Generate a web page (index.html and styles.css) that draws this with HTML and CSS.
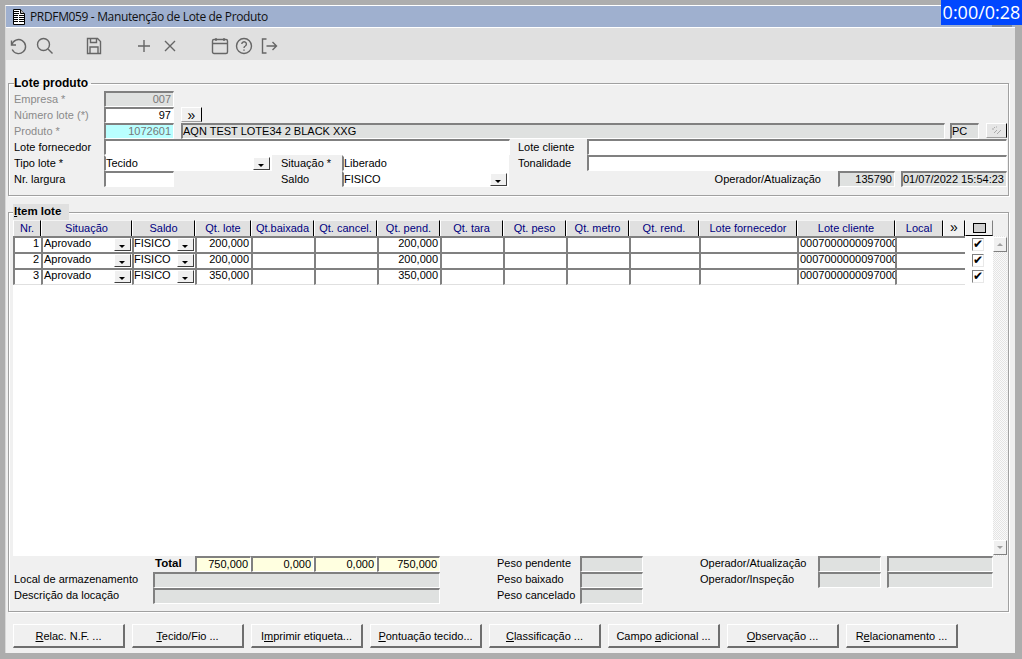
FILE: index.html
```html
<!DOCTYPE html>
<html lang="pt">
<head>
<meta charset="utf-8">
<title>PRDFM059</title>
<link rel="stylesheet" href="styles.css">
</head>
<body>
<div class="timer">0:00/0:28</div>
<div class="window">
  <header class="titlebar">
    <svg class="docicon" viewBox="0 0 13 16" width="13" height="16"><path d="M1.500.5h7l4 4v11h-11z" fill="#fff" stroke="#000"/><path d="M8.500.5v4h4" fill="#bbb" stroke="#000"/><path d="M1 2.500h6M1 4.500h6M1 6.500h11M1 8.500h11M1 10.500h11M1 12.500h11" stroke="#000"/><path d="M6.500 6v8" stroke="#fff"/></svg>
    <span class="title">PRDFM059 - Manutenção de Lote de Produto</span>
    <span class="close-stub"></span>
  </header>
  <nav class="toolbar">
    <svg class="tool t-undo" viewBox="0 0 18 18"><path d="M2.500 3.500v4.500h4.500"/><path d="M2.800 7.800A7 7 0 1 1 3.200 12.500"/></svg>
    <svg class="tool t-search" viewBox="0 0 18 18"><circle cx="7.500" cy="7.500" r="6"/><path d="M12 12l4.500 4.500"/></svg>
    <svg class="tool t-save" viewBox="0 0 18 18"><path d="M2.500 1.500h10l3 3v12h-13z"/><path d="M5.500 1.500v4h6v-4"/><path d="M5 16.500v-6.500h8v6.500"/></svg>
    <svg class="tool t-plus" viewBox="0 0 18 18"><path d="M9 3v12M3 9h12"/></svg>
    <svg class="tool t-close" viewBox="0 0 18 18"><path d="M4 4l10 10M14 4l-10 10"/></svg>
    <svg class="tool t-cal" viewBox="0 0 18 18"><rect x="1.500" y="2.500" width="15" height="14" rx="1.500"/><path d="M1.500 6.500h15M5 1v3M13 1v3"/></svg>
    <svg class="tool t-help" viewBox="0 0 18 18"><circle cx="9" cy="9" r="7.500"/><path d="M6.800 7a2.300 2.300 0 1 1 3.500 2c-.9.500-1.300 1-1.300 2"/><path d="M9 12.600v1.200"/></svg>
    <svg class="tool t-exit" viewBox="0 0 18 18"><path d="M5.500 2h-4v14h4"/><path d="M5.500 9h10M11.500 5l4 4-4 4"/></svg>
  </nav>

  <main class="content">
    <fieldset class="group group-lote">
      <legend class="legend">Lote produto</legend>
      <div class="row">
        <label class="lbl off">Empresa *</label>
        <div class="fld w70 ro right muted">007</div>
      </div>
      <div class="row">
        <label class="lbl off">Número lote (*)</label>
        <div class="fld w70 right">97</div>
        <button class="btn-mini ml7" type="button">»</button>
      </div>
      <div class="row">
        <label class="lbl off">Produto *</label>
        <div class="fld w70 cyan right muted">1072601</div>
        <div class="fld w764 ml7 ro">AQN TEST LOTE34 2 BLACK XXG</div>
        <div class="fld w29 ml5 ro">PC</div>
        <button class="btn-mini ml7 btn-off" type="button">
          <svg viewBox="0 0 12 10" width="12" height="10"><path d="M1 3h2M4 1l-1 1M3 7l3-3M6 8l4-4M5 1h1" stroke="#aaa" fill="none"/></svg>
        </button>
      </div>
      <div class="row">
        <label class="lbl">Lote fornecedor</label>
        <div class="fld w406"></div>
        <label class="lbl-s ml8 w69">Lote cliente</label>
        <div class="fld w420"></div>
      </div>
      <div class="row">
        <label class="lbl">Tipo lote *</label>
        <div class="fld plain w168">Tecido<span class="drop"></span></div>
        <label class="lbl-s ml9 w61">Situação *</label>
        <div class="fld plain w167">Liberado</div>
        <label class="lbl-s ml9 w69">Tonalidade</label>
        <div class="fld w420"></div>
      </div>
      <div class="row">
        <label class="lbl">Nr. largura</label>
        <div class="fld w70"></div>
        <label class="lbl-s ml107 w61">Saldo</label>
        <div class="fld plain w167">FISICO<span class="drop"></span></div>
        <label class="lbl-s grow right">Operador/Atualização</label>
        <div class="fld w57 ml17 ro right">135790</div>
        <div class="fld w106 ml6 ro">01/07/2022 15:54:23</div>
      </div>
    </fieldset>

    <fieldset class="group group-item">
      <legend class="legend legend-item"><u>I</u>tem lote</legend>
      <div class="grid-wrap">
        <div class="grid-main">
          <div class="cols heads">
            <div class="head">Nr.</div><div class="head">Situação</div><div class="head">Saldo</div><div class="head">Qt. lote</div><div class="head">Qt.baixada</div><div class="head">Qt. cancel.</div><div class="head">Qt. pend.</div><div class="head">Qt. tara</div><div class="head">Qt. peso</div><div class="head">Qt. metro</div><div class="head">Qt. rend.</div><div class="head">Lote fornecedor</div><div class="head">Lote cliente</div>
            <div class="head-split"><div class="head">Local</div><div class="head head-more">»</div></div>
            <div class="head head-check"><span class="box"></span></div>
          </div>
          <div class="body">
            <div class="cols rowline">
              <div class="cell right">1</div><div class="cell">Aprovado<span class="drop"></span></div><div class="cell tight">FISICO<span class="drop"></span></div><div class="cell right">200,000</div><div class="cell"></div><div class="cell"></div><div class="cell right">200,000</div><div class="cell"></div><div class="cell"></div><div class="cell"></div><div class="cell"></div><div class="cell"></div><div class="cell clip">0007000000097000</div><div class="cell"></div>
              <div class="cell-check"><span class="check">✔</span></div>
            </div>
            <div class="cols rowline">
              <div class="cell right">2</div><div class="cell">Aprovado<span class="drop"></span></div><div class="cell tight">FISICO<span class="drop"></span></div><div class="cell right">200,000</div><div class="cell"></div><div class="cell"></div><div class="cell right">200,000</div><div class="cell"></div><div class="cell"></div><div class="cell"></div><div class="cell"></div><div class="cell"></div><div class="cell clip">0007000000097000</div><div class="cell"></div>
              <div class="cell-check"><span class="check">✔</span></div>
            </div>
            <div class="cols rowline">
              <div class="cell right">3</div><div class="cell">Aprovado<span class="drop"></span></div><div class="cell tight">FISICO<span class="drop"></span></div><div class="cell right">350,000</div><div class="cell"></div><div class="cell"></div><div class="cell right">350,000</div><div class="cell"></div><div class="cell"></div><div class="cell"></div><div class="cell"></div><div class="cell"></div><div class="cell clip">0007000000097000</div><div class="cell"></div>
              <div class="cell-check"><span class="check">✔</span></div>
            </div>
          </div>
        </div>
        <div class="scrollbar">
          <span class="sb-btn"><i class="arrow-up"></i></span>
          <span class="sb-btn"><i class="arrow-down"></i></span>
        </div>
      </div>

      <div class="totals">
        <div class="tot-left">
          <div class="row">
            <strong class="total-lbl">Total</strong>
            <div class="fld yellow w56 right">750,000</div>
            <div class="fld yellow w63 right">0,000</div>
            <div class="fld yellow w63 right">0,000</div>
            <div class="fld yellow w63 right">750,000</div>
          </div>
          <div class="row"><label class="lbl-t">Local de armazenamento</label><div class="fld ro w287"></div></div>
          <div class="row"><label class="lbl-t">Descrição da locação</label><div class="fld ro w287"></div></div>
        </div>
        <div class="tot-peso">
          <div class="row"><label class="lbl-p">Peso pendente</label><div class="fld ro w63"></div></div>
          <div class="row"><label class="lbl-p">Peso baixado</label><div class="fld ro w63"></div></div>
          <div class="row"><label class="lbl-p">Peso cancelado</label><div class="fld ro w63"></div></div>
        </div>
        <div class="tot-op">
          <div class="row"><label class="lbl-o">Operador/Atualização</label><div class="fld ro w63"></div><div class="fld ro w106 ml6"></div></div>
          <div class="row"><label class="lbl-o">Operador/Inspeção</label><div class="fld ro w63"></div><div class="fld ro w106 ml6"></div></div>
        </div>
      </div>
    </fieldset>

    <footer class="actions">
      <button class="action" type="button"><u>R</u>elac. N.F. ...</button>
      <button class="action" type="button"><u>T</u>ecido/Fio ...</button>
      <button class="action" type="button">I<u>m</u>primir etiqueta...</button>
      <button class="action" type="button"><u>P</u>ontuação tecido...</button>
      <button class="action" type="button"><u>C</u>lassificação ...</button>
      <button class="action" type="button">Campo <u>a</u>dicional ...</button>
      <button class="action" type="button"><u>O</u>bservação ...</button>
      <button class="action" type="button">R<u>e</u>lacionamento ...</button>
    </footer>
  </main>
</div>
</body>
</html>
```
FILE: styles.css
```css
* { box-sizing: border-box; }
html, body { margin: 0; height: 659px; overflow: hidden; }
body {
  position: relative;
  background: #adadad;
  font: 11px/16px "Liberation Sans", Arial, sans-serif;
  color: #000;
  padding: 5px 7px 6px 5px;
}
.timer {
  position: absolute; top: 0; right: 0; width: 81px; height: 25px; z-index: 2;
  background: #0047ff; color: #fff;
  font: 18px/25px "Open Sans", sans-serif;
  text-align: center; white-space: nowrap;
}
.window {
  height: 648px;
  display: flex; flex-direction: column;
  background: #f0f0f0;
  border-top: 1px solid #fff;
  border-left: 1px solid #d8d8d8;
}
.titlebar {
  position: relative;
  height: 22px; flex: none;
  background: #9fb0cf;
  display: flex; align-items: center;
  padding-left: 6px;
  border-bottom: 1px solid #fff;
}
.docicon { flex: none; }
.title { margin-left: 5px; font: 12px/16px "Open Sans", sans-serif; letter-spacing: -.35px; color: #111; white-space: nowrap; }
.close-stub { position: absolute; right: 3px; top: 19px; width: 20px; height: 2px; background: #7f8a9f; }
.toolbar {
  height: 32px; flex: none; background: #e0e0e0;
  display: flex; align-items: center; padding: 3px 0 0 3px;
}
.tool { width: 18px; height: 18px; flex: none; fill: none; stroke: #666; stroke-width: 1.4; }
.t-search { margin-left: 9px; }
.t-save { margin-left: 31px; }
.t-plus { margin-left: 32px; }
.t-close { margin-left: 8px; }
.t-cal { margin-left: 32px; }
.t-help { margin-left: 6px; }
.t-exit { margin-left: 8px; }

.content { flex: 1; display: flex; flex-direction: column; padding: 0 6px 0 2px; min-height: 0; }
.group {
  margin: 0; min-width: 0;
  border: 1px solid #a0a0a0;
  box-shadow: 1px 1px 0 #fff, inset 1px 1px 0 #fff;
}
.group-lote { margin-top: 16px; height: 120px; padding: 1px 1px 0 5px; }
.group-item { margin-top: 8px; height: 408px; padding: 0 1px 0 4px; }
.legend { padding: 0 3px 0 0; margin-left: 0; font-weight: 700; font-size: 12px; line-height: 14px; height: 14px; }
.legend-item { background: #e0e0e0; height: 16px; margin-left: 0; padding: 0 4px 0 1px; width: 56px; font-size: 11.500px; }

.row { display: flex; height: 16px; white-space: nowrap; }
.lbl { width: 90px; flex: none; }
.lbl.off { color: #8a8a8a; }
.lbl-s { flex: none; }
.grow { flex: 1; }
.right { text-align: right; }
.fld {
  position: relative; flex: none; height: 16px;
  border-style: solid; border-width: 2px 1px 1px 2px;
  border-color: #808080 #fff #fff #808080;
  background: #fff; padding: 0 1px 0 0;
  line-height: 13px; overflow: hidden; white-space: nowrap;
}
.fld.right { padding-right: 2px; }
.fld.plain { border-top-color: #fff; }
.ro { background: #dfe1e0; }
.cyan { background: #b9ffff; }
.yellow { background: #ffffe0; }
.muted { color: #777; }
.w29 { width: 29px; } .w56 { width: 56px; } .w57 { width: 57px; } .w61 { width: 61px; }
.w63 { width: 63px; } .w69 { width: 69px; } .w70 { width: 70px; } .w106 { width: 106px; }
.w167 { width: 167px; } .w168 { width: 168px; } .w287 { width: 287px; } .w406 { width: 406px; }
.w420 { width: 420px; } .w764 { width: 764px; }
.ml5 { margin-left: 5px; } .ml6 { margin-left: 6px; } .ml7 { margin-left: 7px; } .ml8 { margin-left: 8px; }
.ml9 { margin-left: 9px; } .ml17 { margin-left: 17px; } .ml107 { margin-left: 107px; }

.btn-mini {
  flex: none; width: 21px; height: 15px; padding: 0; margin-top: 0;
  background: #f0f0f0; border: 0;
  border-right: 1px solid #000; border-bottom: 1px solid #a0a0a0;
  border-top: 1px solid #fff; border-left: 1px solid #fff;
  font: 400 14px/12px "Liberation Sans", sans-serif; color: #000;
  display: flex; align-items: center; justify-content: center;
}
.btn-off { background: #e6e6e6; }

.drop {
  position: absolute; top: 0; right: 1px; width: 17px; height: 13px;
  background: #f0f0f0;
  border-style: solid; border-width: 1px;
  border-color: #fff #404040 #404040 #fff;
}
.drop::after {
  content: ""; position: absolute; left: 4px; top: 6px;
  border: 3px solid transparent; border-top: 3px solid #000; border-bottom: 0;
}

.grid-wrap { display: flex; height: 336px; }
.grid-main { width: 980px; flex: none; display: flex; flex-direction: column; }
.cols {
  display: grid;
  grid-template-columns: 28px 91px 63px 56px 63px 63px 63px 63px 63px 63px 70px 98px 98px 70px 28px;
}
.heads { height: 16px; flex: none; background: #f0f0f0; }
.head {
  height: 16px; min-width: 0;
  background: #e0e0e0; color: #000080;
  border-top: 1px solid #f4f4f4;
  border-left: 1px solid #fff;
  border-right: 1px solid #000;
  text-align: center; line-height: 14px; white-space: nowrap; overflow: hidden;
}
.head-split { display: grid; grid-template-columns: 48px 22px; }
.head-more { background: #f0f0f0; color: #000; font-size: 14px; line-height: 12px; }
.head-check { display: flex; justify-content: center; align-items: center; background: #f0f0f0; border-bottom: 1px solid #000; border-right: 1px solid #808080; }
.box { display: block; width: 13px; height: 10px; background: #d0d0d0; border: 1px solid #000; }
.body { flex: 1; background: #fff; }
.rowline { height: 16px; }
.cell {
  position: relative; min-width: 0; height: 16px;
  border-top: 2px solid #808080; border-left: 2px solid #808080;
  background: #fff; padding: 0 1px;
  line-height: 11px; white-space: nowrap; overflow: hidden;
}
.cell.right { padding-right: 2px; }
.rowline:nth-child(3) .cell { height: 17px; border-bottom: 1px solid #e0e0e0; }
.clip { padding-right: 0; }
.tight { padding-left: 0; }
.cell-check { display: flex; justify-content: center; align-items: center; padding-right: 2px; height: 16px; }
.check {
  display: block; width: 12px; height: 13px;
  border-style: solid; border-width: 1px; border-color: #808080 #e8e8e8 #e8e8e8 #808080;
  background: #fff; font: 700 12px/11px "DejaVu Sans", sans-serif; text-align: center;
}
.scrollbar {
  width: 14px; flex: none; display: flex; flex-direction: column; justify-content: space-between;
  padding: 1px 0;
  margin-top: 16px;
  background: repeating-conic-gradient(#e4e4e4 0 25%, #fafafa 0 50%) 0 0 / 2px 2px;
}
.sb-btn {
  display: flex; justify-content: center; align-items: center;
  height: 15px; background: #f0f0f0;
  border-style: solid; border-width: 1px; border-color: #fff #808080 #808080 #fff;
}
.arrow-up { border: 3px solid transparent; border-bottom: 3px solid #a0a0a0; border-top: 0; }
.arrow-down { border: 3px solid transparent; border-top: 3px solid #a0a0a0; border-bottom: 0; }

.totals { display: flex; line-height: 14px; }
.tot-left { width: 427px; flex: none; }
.total-lbl { width: 182px; padding-left: 142px; flex: none; font-size: 11.500px; }
.lbl-t { width: 140px; flex: none; padding-left: 1px; }
.tot-peso { margin-left: 57px; flex: none; }
.lbl-p { width: 83px; flex: none; }
.tot-op { margin-left: 57px; flex: none; }
.lbl-o { width: 118px; flex: none; }

.actions { display: flex; gap: 7px; margin-top: 12px; padding-left: 5px; }
.action {
  width: 112px; height: 24px; padding: 0;
  background: #f0f0f0;
  border-style: solid; border-width: 1px 2px 2px 1px;
  border-color: #fff #6e6e6e #6e6e6e #fff;
  font: 11px/16px "Liberation Sans", sans-serif; color: #000;
  white-space: nowrap;
}
```
